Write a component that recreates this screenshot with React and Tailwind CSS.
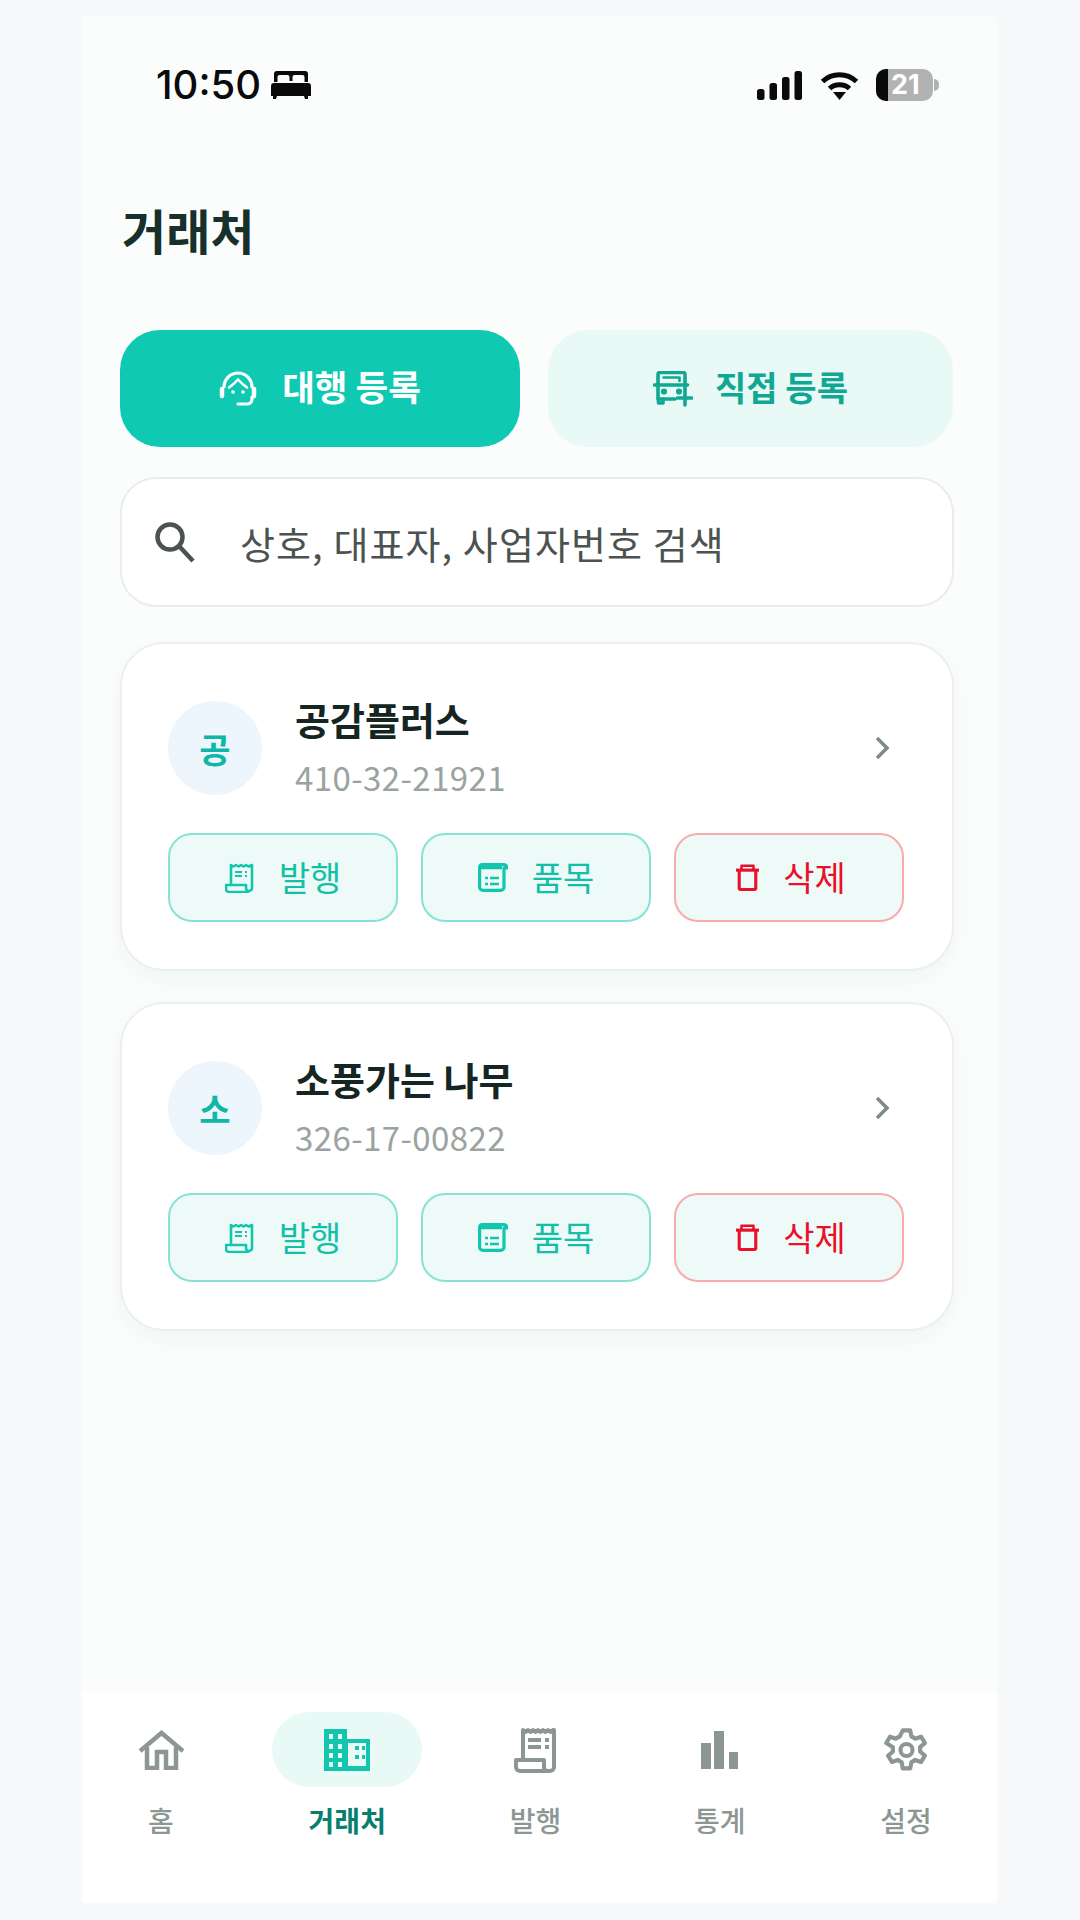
const TEAL = "#12c6ad";
const GRAY = "#8c9693";

function Bed() {
  return (
    <svg width="40" height="28" viewBox="0 0 40 28" fill="#0a0a0a">
      <path d="M6 0h28a3 3 0 0 1 3 3v8h-3.500V6a2 2 0 0 0-2-2h-8a2 2 0 0 0-2 2v4h-3V6a2 2 0 0 0-2-2h-8a2 2 0 0 0-2 2v5H3V3a3 3 0 0 1 3-3z" />
      <path d="M3 12h34a3 3 0 0 1 3 3v10h-3v3h-3l-1-3H6l-1 3H2v-3H0V15a3 3 0 0 1 3-3z" />
    </svg>
  );
}

function Signal() {
  return (
    <svg width="45" height="29" viewBox="0 0 45 29" fill="#0a0a0a">
      <rect x="0" y="18" width="7.500" height="11" rx="2.500" />
      <rect x="12.500" y="12" width="7.500" height="17" rx="2.500" />
      <rect x="25" y="6" width="7.500" height="23" rx="2.500" />
      <rect x="37.500" y="0" width="7.500" height="29" rx="2.500" />
    </svg>
  );
}

function Wifi() {
  return (
    <svg width="39" height="29" viewBox="0 0 39 29" fill="none" stroke="#0a0a0a" strokeWidth="5">
      <path d="M2.500 10.500C12 1.500 27 1.500 36.500 10.500" />
      <path d="M9.500 17.500C15 12.500 24 12.500 29.500 17.500" />
      <path d="M13 21h13l-6.500 8z" fill="#0a0a0a" stroke="none" />
    </svg>
  );
}

function Battery() {
  return (
    <div className="relative flex h-[32px] w-[57px] overflow-hidden rounded-[10px] bg-[#b0b3b2]">
      <div className="h-full w-[12px] bg-[#0a0a0a]" />
      <span className="ml-[3px] font-['Inter',sans-serif] text-[27px] leading-[32px] font-bold text-white">21</span>
    </div>
  );
}

function HeadsetIcon() {
  return (
    <svg width="38" height="35" viewBox="0 0 38 35" fill="none" stroke="#fff" strokeWidth="3.200" strokeLinecap="round" strokeLinejoin="round">
      <path d="M5 16A14 14 0 0 1 33 16" />
      <path d="M3 18v7M35 18v7" strokeWidth="4.500" />
      <path d="M10 16.500Q15 13 19 8.500Q23 13 28 16.500" strokeWidth="2.600" />
      <path d="M33 26v2a5 5 0 0 1-5 5h-9" />
      <circle cx="14" cy="21" r="1.800" fill="#fff" stroke="none" />
      <circle cx="24" cy="21" r="1.800" fill="#fff" stroke="none" />
    </svg>
  );
}

function CarPlusIcon() {
  return (
    <svg width="40" height="36" viewBox="0 0 40 36" fill="none" stroke="#10a892" strokeWidth="3.600" strokeLinecap="round" strokeLinejoin="round">
      <path d="M5 14V3.500A2 2 0 0 1 7 1.500h23a2 2 0 0 1 2 2V14" />
      <path d="M10.500 6.500h16v3.500" strokeWidth="2.600" />
      <path d="M1.500 14h33" />
      <path d="M5 14v14h17M32 14v5" />
      <path d="M5.500 28v4h4.500v-4" />
      <circle cx="11" cy="20.500" r="1.300" fill="#10a892" />
      <circle cx="26" cy="20.500" r="1.300" fill="#10a892" />
      <path d="M32 20v14M24.500 27h14" />
    </svg>
  );
}

function ReceiptSmall() {
  return (
    <svg width="30" height="30" viewBox="0 0 30 30" fill="none" stroke={TEAL} strokeWidth="2.600" strokeLinejoin="round">
      <path d="M6 22V2l2.500 1.500L11 2l2.500 1.500L16 2l2.500 1.500L21 2l2.500 1.500L27 2v23a3 3 0 0 1-6 0v-3H1v4a3 3 0 0 0 3 3h20" />
      <path d="M10 9h7M10 13h7M20 9h2M20 13h2" strokeWidth="2.200" />
    </svg>
  );
}

function ItemIcon() {
  return (
    <svg width="30" height="29" viewBox="0 0 30 29" fill="none" stroke={TEAL} strokeWidth="3.200" strokeLinejoin="round">
      <path d="M4 1.600h22a3.500 3.500 0 0 1 3 3.400h-3V24a3.400 3.400 0 0 1-3.400 3.400H5A3.400 3.400 0 0 1 1.600 24V4A2.400 2.400 0 0 1 4 1.600z" />
      <path d="M2 4.500h22" strokeWidth="3.500" />
      <path d="M7 15h3M12 15h9M7 21h3M12 21h9" strokeWidth="2.400" />
    </svg>
  );
}

function TrashIcon() {
  return (
    <svg width="23" height="29" viewBox="0 0 25 29" fill="none" stroke="#e8102a" strokeWidth="3.400" strokeLinejoin="round">
      <path d="M0 6.500h25" />
      <path d="M6 6V1.800h13V6" strokeWidth="2.800" />
      <path d="M3.500 7v19a1.500 1.500 0 0 0 1.500 1.500h15a1.500 1.500 0 0 0 1.500-1.500V7" />
    </svg>
  );
}

function HomeIcon() {
  return (
    <svg width="45" height="40" viewBox="0 0 45 40" fill="none" stroke={GRAY} strokeWidth="4.500">
      <path d="M1 21L22.500 3 44 21" />
      <path d="M8 17v21h10V22h9v16h10V17" />
    </svg>
  );
}

function BuildingIcon() {
  return (
    <svg width="46" height="42" viewBox="0 0 46 42" fill={TEAL}>
      <path fillRule="evenodd" d="M0 0h23v10h23v32H0zM5 5v5h4V5zm9 0v5h4V5zM5 15v5h4v-5zm9 0v5h4v-5zM5 24v5h4v-5zm9 0v5h4v-5zM5 33v5h4v-5zm9 0v5h4v-5z" />
      <path fill="#e8f9f6" d="M24 12h20v27H24z" />
      <path d="M24 12h20v2H24zM24 37h20v3H24zM42 12h3v27h-3z" />
      <path d="M31 17h4v4h-4zM38 17h3v4h-3zM31 26h4v4h-4zM38 26h3v4h-3z" />
    </svg>
  );
}

function ReceiptNav() {
  return (
    <svg width="43" height="46" viewBox="0 0 43 46" fill="none" stroke={GRAY} strokeWidth="4" strokeLinejoin="round">
      <path d="M9 33V3l2.500 2 2.500-2 2.500 2 2.500-2 2.500 2 2.500-2 2.500 2 2.500-2 2.500 2 2.500-2 2.500 2 2.500-2 1 0V40a4 4 0 0 1-4 4H6a4 4 0 0 1-4-4v-7h28v7a4 4 0 0 0 2 3.500" />
      <path d="M14 13h13M14 20h13M31 13h4M31 20h4" />
    </svg>
  );
}

function ChartIcon() {
  return (
    <svg width="37" height="38" viewBox="0 0 37 38" fill={GRAY}>
      <rect x="0" y="12" width="10" height="26" />
      <rect x="13" y="0" width="10" height="38" />
      <rect x="28" y="21" width="9" height="17" />
    </svg>
  );
}

function GearIcon() {
  return (
    <svg width="45" height="46" viewBox="0 0 24 24" fill="none" stroke={GRAY} strokeWidth="2.200" strokeLinejoin="round">
      <path d="M10 1.500h4l.6 3.300a7.600 7.600 0 0 1 2 1.200l3.200-1.100 2 3.400-2.600 2.200a7.600 7.600 0 0 1 0 2.300l2.600 2.200-2 3.400-3.200-1.100a7.600 7.600 0 0 1-2 1.200l-.6 3.300h-4l-.6-3.300a7.600 7.600 0 0 1-2-1.200l-3.200 1.100-2-3.400 2.600-2.200a7.600 7.600 0 0 1 0-2.300L1.200 8.300l2-3.400L6.400 6a7.600 7.600 0 0 1 2-1.200z" />
      <circle cx="12" cy="12" r="3.200" />
    </svg>
  );
}

function ActionButton({ icon, label, danger }) {
  return (
    <div className={`flex h-[89px] w-[230px] items-center justify-center gap-[24px] rounded-[24px] border-2 bg-[#eefaf8] text-[34px] ${danger ? "border-[#f9abab] pl-[4px] text-[#e8102a]" : "border-[#86e2d3] text-[#12c0a8]"}`}>
      {icon}
      <span className="pb-[3px]">{label}</span>
    </div>
  );
}

function Card({ letter, name, num }) {
  return (
    <div className="flex h-[329px] flex-col rounded-[44px] border-2 border-[#eceff0] bg-white pt-[57px] pr-[47px] pl-[46px] shadow-[0_8px_22px_rgba(20,40,40,0.04)]">
      <div className="flex h-[94px] items-center">
        <div className="flex h-[94px] w-[94px] items-center justify-center rounded-full bg-[#edf5fd] text-[34px] font-bold text-[#0fb8a6]">{letter}</div>
        <div className="ml-[33px] flex flex-col gap-[18px] pb-[6px]">
          <div className="text-[38px] leading-[46px] font-bold text-[#142522]">{name}</div>
          <div className="text-[33px] leading-[34px] tracking-[0.4px] text-[#9aa3a0]">{num}</div>
        </div>
        <svg className="mr-[15px] ml-auto" width="15" height="24" viewBox="0 0 15 24" fill="none" stroke="#7f8987" strokeWidth="3.500">
          <path d="M2 2l10 10L2 22" />
        </svg>
      </div>
      <div className="mt-[38px] flex gap-[23px]">
        <ActionButton icon={<ReceiptSmall />} label="발행" />
        <ActionButton icon={<ItemIcon />} label="품목" />
        <ActionButton icon={<TrashIcon />} label="삭제" danger />
      </div>
    </div>
  );
}

function NavItem({ icon, label, active, shift }) {
  return (
    <div className={`flex w-[150px] flex-col items-center ${shift ? "pl-[4px]" : ""}`}>
      <div className={`flex h-[75px] w-full items-center justify-center rounded-full ${active ? "bg-[#e8f9f6]" : ""}`}>{icon}</div>
      <div className={`mt-[14px] text-[28px] leading-[38px] ${active ? "font-bold text-[#087f6e]" : "font-medium text-[#8c9693]"}`}>{label}</div>
    </div>
  );
}

export default function App() {
  return (
    <div className="h-[1920px] w-[1080px] overflow-hidden bg-[#f7f9fa] pt-[17px] pl-[82px] font-['Noto_Sans_CJK_KR','Noto_Sans',sans-serif]">
      <div className="flex h-[1886px] w-[915px] flex-col bg-[#fbfdfd]">
        <div className="flex h-[136px] items-center pr-[58px] pl-[74px]">
          <span className="font-['Inter',sans-serif] text-[40px] font-medium text-[#0a0a0a]">10:50</span>
          <div className="ml-[10px]"><Bed /></div>
          <div className="ml-auto"><Signal /></div>
          <div className="ml-[18px]"><Wifi /></div>
          <div className="ml-[17px]"><Battery /></div>
          <div className="ml-[1px] h-[12px] w-[5px] rounded-r-full bg-[#b0b3b2]" />
        </div>

        <div className="flex flex-col pr-[43px] pl-[38px]">
          <h1 className="mt-[44px] mb-[69px] pl-[2px] text-[48px] leading-[64px] font-bold text-[#17302b]">거래처</h1>

          <div className="flex gap-[28px]">
            <div className="flex h-[117px] w-[400px] items-center justify-center gap-[25px] rounded-[40px] bg-[#0fc9b2] text-[35.500px] font-bold text-white">
              <HeadsetIcon />
              <span className="pb-[5px]">대행 등록</span>
            </div>
            <div className="flex h-[117px] w-[405px] items-center justify-center gap-[22px] rounded-[40px] bg-[#e8f9f6] text-[34px] font-bold text-[#10a892]">
              <CarPlusIcon />
              <span className="pb-[5px]">직접 등록</span>
            </div>
          </div>

          <div className="mt-[30px] flex h-[130px] items-center rounded-[36px] border-2 border-[#e9edee] bg-white pl-[32px]">
            <svg width="42" height="42" viewBox="0 0 42 42" fill="none" stroke="#4b5250" strokeWidth="4.500">
              <circle cx="16" cy="16" r="12.500" />
              <path d="M25 25l14 15" />
            </svg>
            <span className="ml-[44px] text-[38px] tracking-[1.1px] text-[#4b5250]">상호, 대표자, 사업자번호 검색</span>
          </div>

          <div className="mt-[35px] flex flex-col gap-[31px]">
            <Card letter="공" name="공감플러스" num="410-32-21921" />
            <Card letter="소" name="소풍가는 나무" num="326-17-00822" />
          </div>
        </div>

        <div className="mt-auto flex h-[211px] justify-between bg-white pt-[20px] pr-[16px] pl-[4px]">
          <NavItem icon={<HomeIcon />} label="홈" />
          <NavItem icon={<BuildingIcon />} label="거래처" active />
          <NavItem icon={<ReceiptNav />} label="발행" shift />
          <NavItem icon={<ChartIcon />} label="통계" />
          <NavItem icon={<GearIcon />} label="설정" />
        </div>
      </div>
    </div>
  );
}
